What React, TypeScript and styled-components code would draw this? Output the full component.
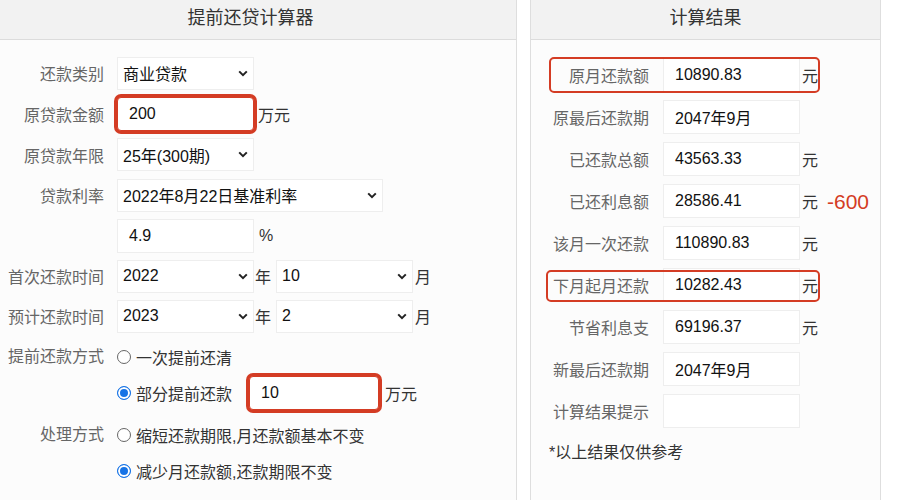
import React from "react";
import styled, { createGlobalStyle, css } from "styled-components";

const RED = "#d43c24";

const GlobalStyle = createGlobalStyle`
  html, body {
    margin: 0;
    padding: 0;
    background: #fff;
  }
  body {
    font-family: "Liberation Sans", "Noto Sans CJK SC", sans-serif;
    color: #222;
  }
`;

const Page = styled.div`
  display: flex;
  align-items: flex-start;
  gap: 13px;
  width: 914px;
  height: 500px;
  overflow: hidden;
`;

const Panel = styled.section<{ $w: number; $edge?: boolean }>`
  flex-shrink: 0;
  box-sizing: border-box;
  width: ${(p) => p.$w}px;
  height: 540px;
  margin-top: -1px;
  margin-left: ${(p) => (p.$edge ? "-1px" : "0")};
  border: 1px solid #dedede;
  background: #fcfcfc;
`;

const PanelHead = styled.h2<{ $shift?: number }>`
  margin: 0;
  height: 39px;
  line-height: 37px;
  padding-right: ${(p) => p.$shift ?? 0}px;
  border-bottom: 1px solid #dcdcdc;
  background: #f2f2f2;
  text-align: center;
  font-size: 18px;
  font-weight: normal;
  color: #333;
`;

const FormBody = styled.div`
  display: flex;
  flex-direction: column;
  padding-top: 13px;
`;

const FieldRow = styled.div<{ $h?: number; $top?: number }>`
  display: flex;
  align-items: center;
  height: ${(p) => (p.$h ? `${p.$h}px` : "auto")};
  margin-top: ${(p) => p.$top ?? 0}px;
`;

const Label = styled.div<{ $top?: boolean }>`
  flex: 0 0 104px;
  margin-right: 13px;
  text-align: right;
  font-size: 16px;
  color: #666;
  white-space: nowrap;
  align-self: ${(p) => (p.$top ? "flex-start" : "center")};
  line-height: ${(p) => (p.$top ? "36px" : "normal")};
`;

const marked = css`
  box-shadow: 0 0 0 3px ${RED};
  border-color: ${RED};
  border-radius: 4px;
`;

const SelectBox = styled.div<{ $w?: number }>`
  box-sizing: border-box;
  display: flex;
  align-items: center;
  justify-content: space-between;
  width: ${(p) => p.$w ?? 137}px;
  height: 33px;
  padding: 0 5px 0 5px;
  background: #fff;
  border: 1px solid #eeeeee;
  font-size: 16px;
  color: #111;
`;

const TextBox = styled.div<{ $w?: number; $marked?: boolean; $ml?: number }>`
  box-sizing: border-box;
  display: flex;
  align-items: center;
  width: ${(p) => p.$w ?? 137}px;
  height: 34px;
  margin-left: ${(p) => p.$ml ?? 0}px;
  padding-left: 11px;
  background: #fff;
  border: 1px solid #eeeeee;
  font-size: 16px;
  color: #111;
  ${(p) => p.$marked && marked}
`;

const Unit = styled.span<{ $ml?: number; $mr?: number }>`
  margin-left: ${(p) => p.$ml ?? 4}px;
  margin-right: ${(p) => p.$mr ?? 0}px;
  font-size: 16px;
  color: #333;
`;

const OptionList = styled.div`
  display: flex;
  flex-direction: column;
`;

const Option = styled.div`
  display: flex;
  align-items: center;
  height: 36px;
  font-size: 16px;
  color: #333;
`;

const Radio = styled.span<{ $on?: boolean }>`
  box-sizing: border-box;
  width: 14px;
  height: 14px;
  margin-right: 5px;
  border-radius: 50%;
  border: 1px solid #666;
  background: #fff;
  ${(p) =>
    p.$on &&
    css`
      border: 1.5px solid #1673e6;
      background: #1673e6;
      box-shadow: inset 0 0 0 2px #fff;
    `}
`;

const ResultBody = styled.div`
  display: flex;
  flex-direction: column;
  padding-top: 14px;
`;

const ResultRow = styled.div<{ $mark?: { l: number; t: number; b: number } }>`
  position: relative;
  display: flex;
  align-items: center;
  height: 42px;
  ${(p) =>
    p.$mark &&
    css`
      &::after {
        content: "";
        position: absolute;
        left: ${p.$mark.l}px;
        right: 60px;
        top: ${p.$mark.t}px;
        bottom: ${p.$mark.b}px;
        border: 2.5px solid ${RED};
        border-radius: 5px;
        pointer-events: none;
      }
    `}
`;

const ResultLabel = styled.div`
  flex: 0 0 100px;
  margin-left: 18px;
  margin-right: 14px;
  text-align: right;
  font-size: 16px;
  color: #666;
  white-space: nowrap;
`;

const Delta = styled.span`
  position: absolute;
  left: 296px;
  top: 50%;
  transform: translateY(-44%);
  font-size: 21px;
  color: ${RED};
`;

const Note = styled.p`
  margin: 7px 0 0 18px;
  font-size: 16px;
  color: #333;
`;

const Chevron = () => (
  <svg width="10" height="7" viewBox="0 0 10 7">
    <path d="M1.2 1.4 L5 5.2 L8.8 1.4" fill="none" stroke="#222" strokeWidth="2" />
  </svg>
);

const Select = ({ value, w }: { value: string; w?: number }) => (
  <SelectBox $w={w}>
    <span>{value}</span>
    <Chevron />
  </SelectBox>
);

type Result = {
  label: string;
  value: string;
  unit?: boolean;
  mark?: { l: number; t: number; b: number };
  delta?: string;
};

const results: Result[] = [
  { label: "原月还款额", value: "10890.83", unit: true, mark: { l: 18, t: 3, b: 3 } },
  { label: "原最后还款期", value: "2047年9月" },
  { label: "已还款总额", value: "43563.33", unit: true },
  { label: "已还利息额", value: "28586.41", unit: true, delta: "-600" },
  { label: "该月一次还款", value: "110890.83", unit: true },
  { label: "下月起月还款", value: "10282.43", unit: true, mark: { l: 15, t: 6, b: 4 } },
  { label: "节省利息支", value: "69196.37", unit: true },
  { label: "新最后还款期", value: "2047年9月" },
  { label: "计算结果提示", value: "" },
];

export default function App() {
  return (
    <>
      <GlobalStyle />
      <Page>
        <Panel $w={518} $edge>
          <PanelHead $shift={15}>提前还贷计算器</PanelHead>
          <FormBody>
            <FieldRow $h={40}>
              <Label>还款类别</Label>
              <Select value="商业贷款" />
            </FieldRow>
            <FieldRow $h={41}>
              <Label>原贷款金额</Label>
              <TextBox $marked>200</TextBox>
              <Unit>万元</Unit>
            </FieldRow>
            <FieldRow $h={41}>
              <Label>原贷款年限</Label>
              <Select value="25年(300期)" />
            </FieldRow>
            <FieldRow $h={40}>
              <Label>贷款利率</Label>
              <Select value="2022年8月22日基准利率" w={266} />
            </FieldRow>
            <FieldRow $h={41}>
              <Label />
              <TextBox>4.9</TextBox>
              <Unit $ml={5}>%</Unit>
            </FieldRow>
            <FieldRow $h={40}>
              <Label>首次还款时间</Label>
              <Select value="2022" />
              <Unit $ml={1} $mr={5}>年</Unit>
              <Select value="10" />
              <Unit $ml={2}>月</Unit>
            </FieldRow>
            <FieldRow $h={40}>
              <Label>预计还款时间</Label>
              <Select value="2023" />
              <Unit $ml={1} $mr={5}>年</Unit>
              <Select value="2" />
              <Unit $ml={2}>月</Unit>
            </FieldRow>
            <FieldRow $top={3}>
              <Label $top>提前还款方式</Label>
              <OptionList>
                <Option>
                  <Radio />
                  一次提前还清
                </Option>
                <Option>
                  <Radio $on />
                  部分提前还款
                  <TextBox $w={130} $ml={17} $marked>
                    10
                  </TextBox>
                  <Unit $ml={6}>万元</Unit>
                </Option>
              </OptionList>
            </FieldRow>
            <FieldRow $top={6}>
              <Label $top>处理方式</Label>
              <OptionList>
                <Option>
                  <Radio />
                  缩短还款期限,月还款额基本不变
                </Option>
                <Option>
                  <Radio $on />
                  减少月还款额,还款期限不变
                </Option>
              </OptionList>
            </FieldRow>
          </FormBody>
        </Panel>

        <Panel $w={351}>
          <PanelHead>计算结果</PanelHead>
          <ResultBody>
            {results.map((r) => (
              <ResultRow key={r.label} $mark={r.mark}>
                <ResultLabel>{r.label}</ResultLabel>
                <TextBox>{r.value}</TextBox>
                {r.unit && <Unit $ml={2}>元</Unit>}
                {r.delta && <Delta>{r.delta}</Delta>}
              </ResultRow>
            ))}
            <Note>*以上结果仅供参考</Note>
          </ResultBody>
        </Panel>
      </Page>
    </>
  );
}
